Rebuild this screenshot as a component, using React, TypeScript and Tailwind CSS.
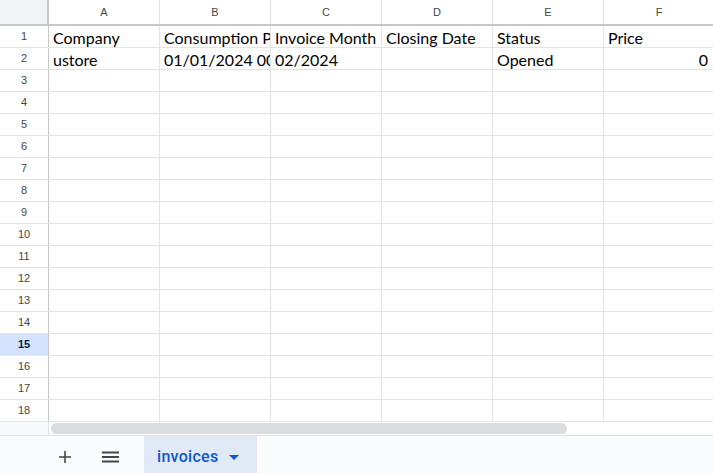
import React from 'react';

const COLS = ['A', 'B', 'C', 'D', 'E', 'F'];

const DATA: Record<number, { text: string; right?: boolean }[]> = {
    1: [{ text: 'Company' }, { text: 'Consumption Period' }, { text: 'Invoice Month' }, { text: 'Closing Date' }, { text: 'Status' }, { text: 'Price' }],
    2: [{ text: 'ustore' }, { text: '01/01/2024 00:00:00' }, { text: '02/2024' }, { text: '' }, { text: 'Opened' }, { text: '0', right: true }],
};

const ROWS = Array.from({ length: 18 }, (_, i) => i + 1);

export default function App() {
    return (
        <div className="w-[713px] h-[473px] overflow-hidden bg-white flex flex-col" style={{ fontFamily: 'Lato, "Open Sans", sans-serif' }}>
            {/* column headers */}
            <div className="flex h-[26px] shrink-0 border-b-2 border-[#c4c7c5]">
                <div className="w-[49px] shrink-0 bg-[#f1f3f4] border-r-2 border-[#c4c7c5]" />
                {COLS.map((c) => (
                    <div
                        key={c}
                        className="w-[111px] shrink-0 border-r border-[#e1e3e1] flex items-center justify-center text-[11px] text-[#444746]"
                        style={{ fontFamily: '"Liberation Sans", Arial, sans-serif' }}
                    >
                        {c}
                    </div>
                ))}
            </div>

            {/* rows */}
            {ROWS.map((r) => (
                <div key={r} className="flex h-[22px] shrink-0 border-b border-[#e2e3e3]">
                    <div
                        className={`w-[49px] shrink-0 border-r border-[#c4c7c5] flex items-center justify-center text-[11px] ${r === 15 ? 'bg-[#d3e3fd] text-[#041e49] font-bold' : 'text-[#444746]'}`}
                        style={{ fontFamily: '"Liberation Sans", Arial, sans-serif' }}
                    >
                        {r}
                    </div>
                    {COLS.map((c, i) => {
                        const cell = DATA[r]?.[i];
                        return (
                            <div
                                key={c}
                                className={`w-[111px] shrink-0 border-r border-[#e2e3e3] overflow-hidden whitespace-nowrap flex items-end px-[4px] text-[16px] leading-[19px] text-black ${cell?.right ? 'justify-end pr-[6px]' : ''}`}
                            >
                                {cell?.text}
                            </div>
                        );
                    })}
                </div>
            ))}

            {/* horizontal scrollbar */}
            <div className="flex h-[13px] shrink-0">
                <div className="w-[49px] shrink-0 bg-[#f8f9fa] border-r border-[#e1e3e1]" />
                <div className="flex-1 flex items-center pl-[2px]">
                    <div className="w-[516px] h-[11px] rounded-full bg-[#dadce0]" />
                </div>
            </div>

            {/* sheet tabs */}
            <div className="flex-1 flex items-stretch bg-[#f9fbfd] border-t border-[#e1e3e1]" style={{ fontFamily: 'Roboto, sans-serif' }}>
                <div className="w-[144px] shrink-0 flex items-center pt-[5px]">
                    <svg className="ml-[58px]" width="14" height="14" viewBox="0 0 14 14">
                        <path d="M7 1v12M1 7h12" stroke="#444746" strokeWidth="1.6" />
                    </svg>
                    <svg className="ml-[30px]" width="17" height="14" viewBox="0 0 17 14">
                        <path d="M0 2.5h17M0 7h17M0 11.5h17" stroke="#444746" strokeWidth="1.8" />
                    </svg>
                </div>
                <div className="w-[113px] shrink-0 bg-[#e1e9f7] flex items-center pl-[13px] gap-[10px] pt-[5px]">
                    <span className="text-[16px] font-medium text-[#0b57d0] tracking-[0.3px]">invoices</span>
                    <svg width="10" height="5" viewBox="0 0 10 5">
                        <path d="M0 0h10L5 5z" fill="#0b57d0" />
                    </svg>
                </div>
            </div>
        </div>
    );
}
